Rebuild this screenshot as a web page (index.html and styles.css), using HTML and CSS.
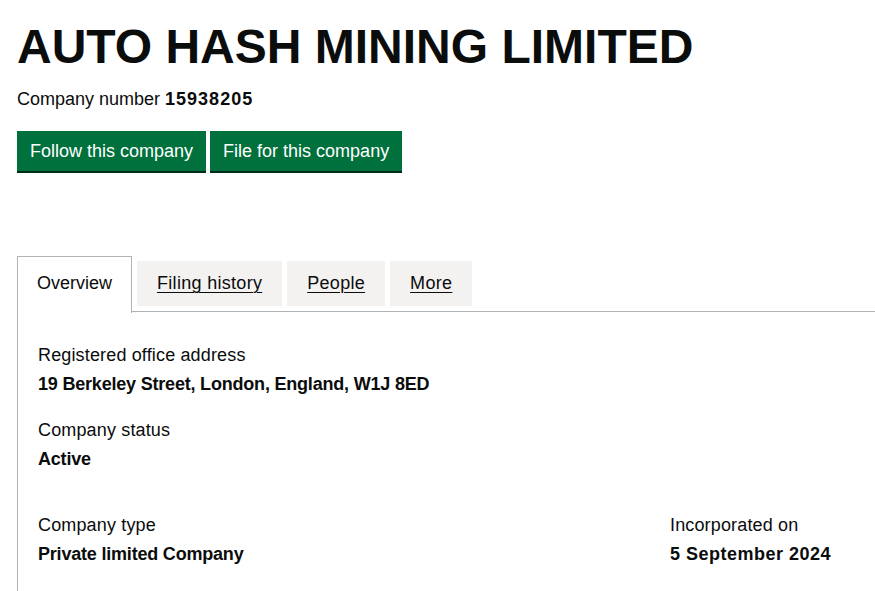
FILE: index.html
```html
<!DOCTYPE html>
<html lang="en">
<head>
<meta charset="utf-8">
<title>AUTO HASH MINING LIMITED</title>
<link rel="stylesheet" href="styles.css">
</head>
<body>
<main class="page">
  <h1 class="heading">AUTO HASH MINING LIMITED</h1>
  <p class="company-number">Company number <strong>15938205</strong></p>
  <div class="actions">
    <a class="button" href="#">Follow this company</a>
    <a class="button" href="#">File for this company</a>
  </div>
  <div class="tabs">
    <ul class="tab-list">
      <li class="tab tab-selected"><a href="#">Overview</a></li>
      <li class="tab"><a href="#">Filing history</a></li>
      <li class="tab"><a href="#">People</a></li>
      <li class="tab"><a href="#">More</a></li>
    </ul>
    <section class="panel">
      <dl class="item">
        <dt class="label">Registered office address</dt>
        <dd class="value">19 Berkeley Street, London, England, W1J 8ED</dd>
      </dl>
      <dl class="item">
        <dt class="label">Company status</dt>
        <dd class="value">Active</dd>
      </dl>
      <div class="row">
        <dl class="item item-last">
          <dt class="label">Company type</dt>
          <dd class="value">Private limited Company</dd>
        </dl>
        <dl class="item item-last">
          <dt class="label">Incorporated on</dt>
          <dd class="value value-date">5 September 2024</dd>
        </dl>
      </div>
    </section>
  </div>
</main>
</body>
</html>
```
FILE: styles.css
```css
html, body {
  margin: 0;
  padding: 0;
  background: #ffffff;
  overflow: hidden;
}
body {
  font-family: "Liberation Sans", Arial, sans-serif;
  color: #0b0c0c;
  font-size: 18px;
  line-height: 25px;
}
.page {
  padding: 22px 0 0 17px;
}
.heading {
  margin: 0;
  font-size: 48px;
  line-height: 50px;
  font-weight: 700;
  color: #0b0c0c;
}
.company-number {
  margin: 15px 0 0;
  font-size: 18px;
  line-height: 25px;
}
.company-number strong {
  font-weight: 700;
  letter-spacing: 1px;
}
.actions {
  display: flex;
  gap: 4px;
  margin-top: 19px;
}
.button {
  display: block;
  background: #00703c;
  color: #ffffff;
  text-decoration: none;
  font-size: 18px;
  line-height: 26px;
  padding: 7px 13px;
  box-shadow: 0 2px 0 #002d18;
}
.tabs {
  margin-top: 90px;
}
.tab-list {
  display: flex;
  align-items: flex-start;
  list-style: none;
  margin: 0;
  padding: 0;
  height: 50px;
  border-bottom: 1px solid #b1b4b6;
}
.tab {
  background: #f3f2f1;
  padding: 10px 20px;
  margin-right: 5px;
  letter-spacing: 0.3px;
}
.tab a {
  color: #0b0c0c;
  text-decoration: underline;
  text-underline-offset: 3px;
  text-decoration-thickness: 1px;
}
.tab-selected {
  background: #ffffff;
  border: 1px solid #b1b4b6;
  border-bottom: 0;
  margin-top: -5px;
  padding: 14px 19px 17px;
  position: relative;
  z-index: 1;
  letter-spacing: 0;
}
.tab-selected a {
  text-decoration: none;
}
.panel {
  border-left: 1px solid #b1b4b6;
  padding: 31px 0 24px 20px;
}
.item {
  margin: 0 0 21px;
}
.item-last {
  margin-bottom: 0;
}
.label {
  margin: 0;
  letter-spacing: 0.15px;
}
.value {
  margin: 4px 0 0;
  font-weight: 700;
  letter-spacing: -0.2px;
}
.value-date {
  letter-spacing: 0.5px;
}
.row {
  display: grid;
  grid-template-columns: 632px 1fr;
  padding-top: 20px;
}
```
